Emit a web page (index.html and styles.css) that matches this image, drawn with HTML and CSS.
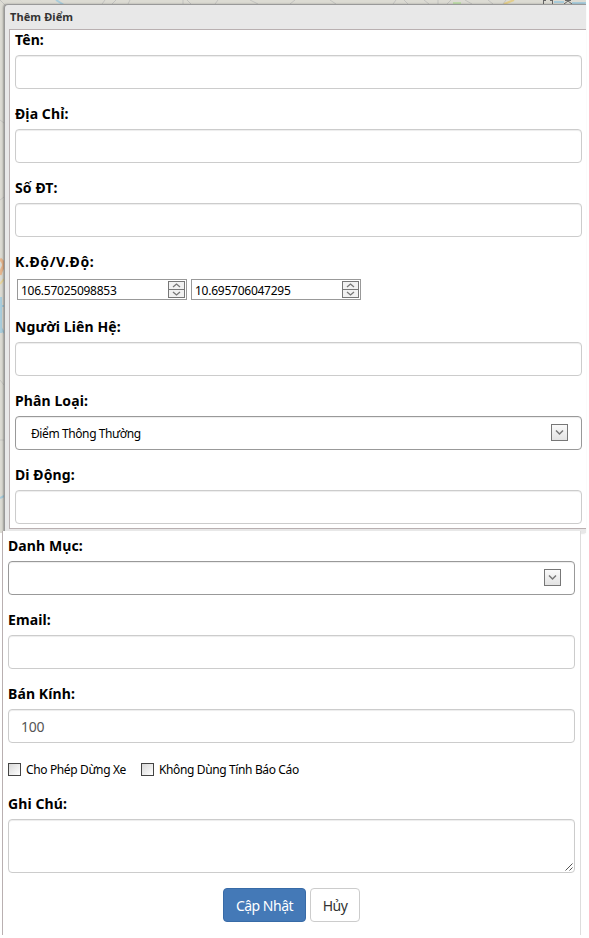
FILE: index.html
```html
<!DOCTYPE html>
<html lang="vi">
<head>
    <meta charset="UTF-8">
    <meta name="viewport" content="width=device-width, initial-scale=1.0">
    <title>Thêm Điểm</title>
    <link rel="stylesheet" href="styles.css">
</head>
<body>
    <div class="map">
        <!-- Nền bản đồ -->
        <svg class="map-bg" width="586" height="533" viewBox="0 0 586 533" fill="none">
            <rect width="586" height="533" fill="#dcdbd3"/>
            <path d="M0 0l5 5M102 4l3-4M112 4l4-4M128 4l2-4M183 0v4M187 0l4 4M215 4l3-4M250 0l8 4M290 4l5-4M330 0l6 4M393 4l3-4M404 0l4 4M424 0l5 4M438 0v4M447 4l4-4M465 0l7 4M488 0l5 4M503 4l3-4" stroke="#c3c3c0"/>
            <path d="M56 0l8 5M554 2h10M572 3h14" stroke="#a9cddc" stroke-width="2"/>
            <path d="M453 3h8" stroke="#bfdcab" stroke-width="2"/>
            <path d="M504 4l10-4" stroke="#e3ce8b" stroke-width="2"/>
            <path d="M543.5 4V0M552.5 4V0M543 .5h3M550 .5h3M564 4l4-3 4 3M565 .5h6" stroke="#666"/>
            <path d="M0 259q5 4 3 8t-3 8" stroke="#e6b58d" stroke-width="3"/>
            <path d="M0 284l4-5" stroke="#e8d59b" stroke-width="2"/>
            <path d="M1 297v36M0 306h4M0 326l4 7M0 498l4-2" stroke="#a9cddc" stroke-width="2"/>
            <path d="M0 120l4 3M0 200l4-3M0 380l4 5M0 440h4" stroke="#c8c8c4"/>
        </svg>

        <div class="window">
            <div class="window-title">Thêm Điểm</div>
            <div class="panel">
                <div class="form-group">
                    <label for="ten">Tên:</label>
                    <input type="text" class="form-control" id="ten">
                </div>
                <div class="form-group">
                    <label for="diachi">Địa Chỉ:</label>
                    <input type="text" class="form-control" id="diachi">
                </div>
                <div class="form-group">
                    <label for="sodt">Số ĐT:</label>
                    <input type="text" class="form-control" id="sodt">
                </div>
                <div class="form-group">
                    <label class="coord-label">K.Độ/V.Độ:</label>
                    <div class="spin-row">
                        <div class="spin">
                            <span class="spin-value">106.57025098853</span>
                            <svg class="spin-btn" width="17" height="17" viewBox="0 0 17 17">
                                <rect x=".5" y=".5" width="16" height="16" fill="#f1f1f1" stroke="#777"/>
                                <path d="M1 8.5h15" stroke="#777"/>
                                <path d="M5 6l3.5-3L12 6M5 11l3.5 3L12 11" fill="none" stroke="#777" stroke-width="1.3"/>
                            </svg>
                        </div>
                        <div class="spin">
                            <span class="spin-value">10.695706047295</span>
                            <svg class="spin-btn" width="17" height="17" viewBox="0 0 17 17">
                                <rect x=".5" y=".5" width="16" height="16" fill="#f1f1f1" stroke="#777"/>
                                <path d="M1 8.5h15" stroke="#777"/>
                                <path d="M5 6l3.5-3L12 6M5 11l3.5 3L12 11" fill="none" stroke="#777" stroke-width="1.3"/>
                            </svg>
                        </div>
                    </div>
                </div>
                <div class="form-group">
                    <label for="lienhe">Người Liên Hệ:</label>
                    <input type="text" class="form-control" id="lienhe">
                </div>
                <div class="form-group">
                    <label>Phân Loại:</label>
                    <div class="form-control combo">
                        <span>Điểm Thông Thường</span>
                        <span class="combo-btn">
                            <svg width="15" height="15" viewBox="0 0 15 15"><path d="M4 5.5l3.5 3.5L11 5.5" fill="none" stroke="#777" stroke-width="1.5"/></svg>
                        </span>
                    </div>
                </div>
                <div class="form-group">
                    <label for="didong">Di Động:</label>
                    <input type="text" class="form-control" id="didong">
                </div>
            </div>
        </div>
    </div>

    <div class="panel-bottom">
        <div class="form-group">
            <label>Danh Mục:</label>
            <div class="form-control combo">
                <span></span>
                <span class="combo-btn">
                    <svg width="15" height="15" viewBox="0 0 15 15"><path d="M4 5.5l3.5 3.5L11 5.5" fill="none" stroke="#777" stroke-width="1.5"/></svg>
                </span>
            </div>
        </div>
        <div class="form-group">
            <label for="email">Email:</label>
            <input type="text" class="form-control" id="email">
        </div>
        <div class="form-group">
            <label for="bankinh">Bán Kính:</label>
            <input type="text" class="form-control" id="bankinh" value="100">
        </div>
        <div class="checks">
            <label class="check"><span class="box"></span>Cho Phép Dừng Xe</label>
            <label class="check"><span class="box"></span>Không Dùng Tính Báo Cáo</label>
        </div>
        <div class="form-group">
            <label>Ghi Chú:</label>
            <div class="form-control note">
                <svg width="8" height="8" viewBox="0 0 8 8"><path d="M.5 7.5l7-7M4.5 7.5l3-3" stroke="#555" fill="none"/></svg>
            </div>
        </div>
        <div class="buttons">
            <button class="btn btn-primary">Cập Nhật</button>
            <button class="btn btn-default">Hủy</button>
        </div>
    </div>
</body>
</html>
```
FILE: styles.css
```css
* {
    box-sizing: border-box;
}

body {
    margin: 0;
    background-color: #fff;
    font-family: "Noto Sans", "DejaVu Sans Condensed", sans-serif;
    font-size: 12px;
    color: #000;
}

.map {
    position: relative;
    width: 586px;
    height: 531px;
    padding: 4px 0 0 4px;
}

.map-bg {
    position: absolute;
    left: 0;
    top: 0;
}

.window {
    position: relative;
    height: 529px;
    background-color: #e8e8e8;
    border-top: 1px solid #999;
    border-left: 1px solid #999;
    border-top-left-radius: 4px;
    padding-left: 4px;
    box-shadow: -1px 0 2px rgba(0, 0, 0, 0.3);
}

.window-title {
    height: 24px;
    padding-left: 1px;
    font-size: 11px;
    font-weight: bold;
    line-height: 24px;
    letter-spacing: 0.1px;
    color: #333;
}

.panel {
    height: 500px;
    padding-left: 5px;
    background-color: #fff;
    border: 1px solid #b9b0b1;
    border-right: none;
}

.form-group {
    width: 567px;
    margin-bottom: 15px;
}

.form-group > label {
    display: block;
    height: 20px;
    margin-bottom: 5px;
    font-size: 14px;
    font-weight: bold;
    line-height: 20px;
    letter-spacing: 0.1px;
}

.form-group > .coord-label {
    letter-spacing: 0.6px;
}

.form-control {
    display: block;
    width: 100%;
    height: 34px;
    padding: 6px 12px;
    background-color: #fff;
    border: 1px solid #ccc;
    border-radius: 4px;
    box-shadow: inset 0 1px 1px rgba(0, 0, 0, 0.075);
    font-family: inherit;
    font-size: 14px;
    color: #555;
}

#bankinh {
    letter-spacing: -0.3px;
}

.spin-row {
    display: flex;
    gap: 4px;
    height: 25px;
    padding: 2px 0 2px 2px;
}

.spin {
    display: flex;
    align-items: center;
    justify-content: space-between;
    width: 170px;
    height: 21px;
    padding: 0 1px 0 3px;
    border: 1px solid #999;
}

.spin-value {
    padding-top: 1px;
    letter-spacing: -0.25px;
}

.combo {
    display: flex;
    align-items: center;
    justify-content: space-between;
    padding: 0 13px 0 15px;
    border-color: #999;
    font-size: 12px;
    letter-spacing: -0.4px;
    color: #000;
}

.combo-btn {
    width: 17px;
    height: 17px;
    margin-bottom: 1px;
    border: 1px solid #777;
    background: linear-gradient(#fafafa, #e3e3e3);
}

.combo-btn svg {
    display: block;
}

/* Phần dưới của form */
.panel-bottom {
    position: relative;
    width: 579px;
    height: 404px;
    margin-left: 2px;
    padding: 5px 0 0 5px;
    background-color: #fff;
    border-left: 1px solid #b9b0b1;
    border-right: 1px solid #ddd;
}

.checks {
    display: flex;
    gap: 15px;
    height: 36px;
}

.check {
    display: flex;
    align-items: center;
    gap: 5px;
    height: 23px;
    letter-spacing: -0.37px;
}

.box {
    width: 13px;
    height: 13px;
    border: 1px solid #444;
    background: linear-gradient(135deg, #d8d8d8, #fff);
}

.note {
    display: flex;
    align-items: flex-end;
    justify-content: flex-end;
    height: 54px;
    padding: 0 1px 1px 0;
}

.buttons {
    display: flex;
    justify-content: center;
    gap: 4px;
    width: 567px;
}

.btn {
    height: 34px;
    padding: 0;
    border: 1px solid #ccc;
    border-radius: 4px;
    background-color: #fff;
    font-family: inherit;
    font-size: 14px;
    letter-spacing: -0.5px;
    white-space: nowrap;
    color: #333;
}

.btn-primary {
    width: 83px;
    background-color: #4479b7;
    border-color: #386ba7;
    color: #fff;
}

.btn-default {
    width: 50px;
}
```
